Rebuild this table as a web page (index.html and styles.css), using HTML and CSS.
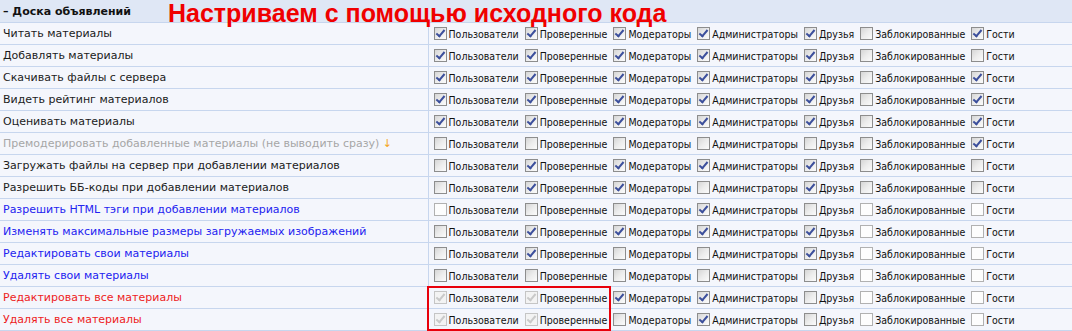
FILE: index.html
```html
<!DOCTYPE html>
<html lang="ru">
<head>
<meta charset="utf-8">
<title>Доска объявлений</title>
<link rel="stylesheet" href="styles.css">
</head>
<body>
<div class="wrap">
<table class="perm">
<colgroup><col class="c-name"><col class="c-opts"></colgroup>
<tr class="head"><td colspan="2"><div class="head-in"><b>– Доска объявлений</b><span class="note">Настриваем с помощью исходного кода</span></div></td></tr>
<tr><td class="name">Читать материалы</td><td class="opts"><div class="olist"><span class="opt"><i class="cb on"></i>Пользователи</span><span class="opt"><i class="cb on"></i>Проверенные</span><span class="opt"><i class="cb on"></i>Модераторы</span><span class="opt"><i class="cb on"></i>Администраторы</span><span class="opt"><i class="cb on"></i>Друзья</span><span class="opt"><i class="cb"></i>Заблокированные</span><span class="opt"><i class="cb on"></i>Гости</span></div></td></tr>
<tr><td class="name">Добавлять материалы</td><td class="opts"><div class="olist"><span class="opt"><i class="cb on"></i>Пользователи</span><span class="opt"><i class="cb on"></i>Проверенные</span><span class="opt"><i class="cb on"></i>Модераторы</span><span class="opt"><i class="cb on"></i>Администраторы</span><span class="opt"><i class="cb on"></i>Друзья</span><span class="opt"><i class="cb"></i>Заблокированные</span><span class="opt"><i class="cb"></i>Гости</span></div></td></tr>
<tr><td class="name">Скачивать файлы с сервера</td><td class="opts"><div class="olist"><span class="opt"><i class="cb on"></i>Пользователи</span><span class="opt"><i class="cb on"></i>Проверенные</span><span class="opt"><i class="cb on"></i>Модераторы</span><span class="opt"><i class="cb on"></i>Администраторы</span><span class="opt"><i class="cb on"></i>Друзья</span><span class="opt"><i class="cb"></i>Заблокированные</span><span class="opt"><i class="cb on"></i>Гости</span></div></td></tr>
<tr><td class="name">Видеть рейтинг материалов</td><td class="opts"><div class="olist"><span class="opt"><i class="cb on"></i>Пользователи</span><span class="opt"><i class="cb on"></i>Проверенные</span><span class="opt"><i class="cb on"></i>Модераторы</span><span class="opt"><i class="cb on"></i>Администраторы</span><span class="opt"><i class="cb on"></i>Друзья</span><span class="opt"><i class="cb"></i>Заблокированные</span><span class="opt"><i class="cb on"></i>Гости</span></div></td></tr>
<tr><td class="name">Оценивать материалы</td><td class="opts"><div class="olist"><span class="opt"><i class="cb on"></i>Пользователи</span><span class="opt"><i class="cb on"></i>Проверенные</span><span class="opt"><i class="cb on"></i>Модераторы</span><span class="opt"><i class="cb on"></i>Администраторы</span><span class="opt"><i class="cb on"></i>Друзья</span><span class="opt"><i class="cb"></i>Заблокированные</span><span class="opt"><i class="cb on"></i>Гости</span></div></td></tr>
<tr><td class="name muted">Премодерировать добавленные материалы (не выводить сразу) <span class="arrow">↓</span></td><td class="opts"><div class="olist"><span class="opt"><i class="cb"></i>Пользователи</span><span class="opt"><i class="cb"></i>Проверенные</span><span class="opt"><i class="cb"></i>Модераторы</span><span class="opt"><i class="cb"></i>Администраторы</span><span class="opt"><i class="cb"></i>Друзья</span><span class="opt"><i class="cb"></i>Заблокированные</span><span class="opt"><i class="cb on"></i>Гости</span></div></td></tr>
<tr><td class="name">Загружать файлы на сервер при добавлении материалов</td><td class="opts"><div class="olist"><span class="opt"><i class="cb"></i>Пользователи</span><span class="opt"><i class="cb on"></i>Проверенные</span><span class="opt"><i class="cb on"></i>Модераторы</span><span class="opt"><i class="cb on"></i>Администраторы</span><span class="opt"><i class="cb on"></i>Друзья</span><span class="opt"><i class="cb"></i>Заблокированные</span><span class="opt"><i class="cb"></i>Гости</span></div></td></tr>
<tr><td class="name">Разрешить ББ-коды при добавлении материалов</td><td class="opts"><div class="olist"><span class="opt"><i class="cb"></i>Пользователи</span><span class="opt"><i class="cb on"></i>Проверенные</span><span class="opt"><i class="cb on"></i>Модераторы</span><span class="opt"><i class="cb"></i>Администраторы</span><span class="opt"><i class="cb on"></i>Друзья</span><span class="opt"><i class="cb"></i>Заблокированные</span><span class="opt"><i class="cb"></i>Гости</span></div></td></tr>
<tr><td class="name blue">Разрешить HTML тэги при добавлении материалов</td><td class="opts"><div class="olist"><span class="opt"><i class="cb plain"></i>Пользователи</span><span class="opt"><i class="cb"></i>Проверенные</span><span class="opt"><i class="cb"></i>Модераторы</span><span class="opt"><i class="cb on"></i>Администраторы</span><span class="opt"><i class="cb"></i>Друзья</span><span class="opt"><i class="cb plain"></i>Заблокированные</span><span class="opt"><i class="cb plain"></i>Гости</span></div></td></tr>
<tr><td class="name blue">Изменять максимальные размеры загружаемых изображений</td><td class="opts"><div class="olist"><span class="opt"><i class="cb"></i>Пользователи</span><span class="opt"><i class="cb on"></i>Проверенные</span><span class="opt"><i class="cb on"></i>Модераторы</span><span class="opt"><i class="cb on"></i>Администраторы</span><span class="opt"><i class="cb on"></i>Друзья</span><span class="opt"><i class="cb plain"></i>Заблокированные</span><span class="opt"><i class="cb plain"></i>Гости</span></div></td></tr>
<tr><td class="name blue">Редактировать свои материалы</td><td class="opts"><div class="olist"><span class="opt"><i class="cb"></i>Пользователи</span><span class="opt"><i class="cb on"></i>Проверенные</span><span class="opt"><i class="cb"></i>Модераторы</span><span class="opt"><i class="cb"></i>Администраторы</span><span class="opt"><i class="cb on"></i>Друзья</span><span class="opt"><i class="cb plain"></i>Заблокированные</span><span class="opt"><i class="cb plain"></i>Гости</span></div></td></tr>
<tr><td class="name blue">Удалять свои материалы</td><td class="opts"><div class="olist"><span class="opt"><i class="cb"></i>Пользователи</span><span class="opt"><i class="cb"></i>Проверенные</span><span class="opt"><i class="cb"></i>Модераторы</span><span class="opt"><i class="cb"></i>Администраторы</span><span class="opt"><i class="cb"></i>Друзья</span><span class="opt"><i class="cb plain"></i>Заблокированные</span><span class="opt"><i class="cb plain"></i>Гости</span></div></td></tr>
<tr><td class="name red">Редактировать все материалы</td><td class="opts"><div class="olist"><span class="opt"><i class="cb dis"></i>Пользователи</span><span class="opt"><i class="cb dis"></i>Проверенные</span><span class="opt"><i class="cb on"></i>Модераторы</span><span class="opt"><i class="cb on"></i>Администраторы</span><span class="opt"><i class="cb"></i>Друзья</span><span class="opt"><i class="cb plain"></i>Заблокированные</span><span class="opt"><i class="cb plain"></i>Гости</span></div></td></tr>
<tr><td class="name red">Удалять все материалы</td><td class="opts"><div class="olist"><span class="opt"><i class="cb dis"></i>Пользователи</span><span class="opt"><i class="cb dis"></i>Проверенные</span><span class="opt"><i class="cb"></i>Модераторы</span><span class="opt"><i class="cb on"></i>Администраторы</span><span class="opt"><i class="cb"></i>Друзья</span><span class="opt"><i class="cb plain"></i>Заблокированные</span><span class="opt"><i class="cb plain"></i>Гости</span></div></td></tr>
</table>
<div class="mark"></div>
</div>
</body>
</html>
```

FILE: styles.css
```css
html, body {
  margin: 0;
  padding: 0;
  background: #f4f6fc;
}
.wrap {
  position: relative;
  width: 1072px;
}
.perm {
  width: 1072px;
  border-collapse: collapse;
  table-layout: fixed;
  font-family: "DejaVu Sans", Verdana, sans-serif;
  font-size: 11px;
  color: #1b1b1b;
}
.c-name { width: 428px; }
.c-opts { width: 644px; }
.perm td {
  padding: 0;
  border-bottom: 1px solid #c7d6ee;
  background: #f4f6fc;
  height: 21px;
  vertical-align: middle;
  overflow: hidden;
}
.perm .head td {
  background: #dfe7f5;
  height: 22px;
  overflow: visible;
}
.head-in {
  display: flex;
  align-items: center;
  height: 22px;
  padding-left: 3px;
  white-space: nowrap;
}
.head-in b {
  font-weight: bold;
  color: #111;
}
.note {
  margin-left: 37px;
  font-family: "Liberation Sans", Arial, sans-serif;
  font-weight: bold;
  font-size: 25px;
  line-height: 28px;
  color: #f00000;
  position: relative;
  top: 2px;
}
.perm td.name {
  padding-left: 3px;
  border-right: 1px solid #c7d6ee;
  white-space: nowrap;
}
.muted { color: #a6a6a6; }
.arrow { color: #f5a623; font-family: "DejaVu Sans", sans-serif; }
.blue { color: #2323f0; }
.red { color: #ee1c1c; }
.olist {
  display: flex;
  align-items: center;
  gap: 6px;
  padding-left: 5px;
  white-space: nowrap;
  font-family: "DejaVu Sans Condensed", "DejaVu Sans", sans-serif;
  font-stretch: condensed;
  font-size: 10.5px;
  color: #111;
}
.opt {
  display: inline-flex;
  align-items: center;
  gap: 2px;
}
.cb {
  display: inline-block;
  box-sizing: border-box;
  width: 13px;
  height: 13px;
  border: 1px solid #8d8d8d;
  background: linear-gradient(135deg, #d6d6d6 0%, #ececec 50%, #fbfbfb 100%);
  position: relative;
}
.cb.plain {
  border-color: #b1b1b1;
  background: #fdfdfd;
}
.cb.on::after,
.cb.dis::after {
  content: "";
  position: absolute;
  left: 3px;
  top: 0px;
  width: 3px;
  height: 7px;
  border: solid #3c4f9c;
  border-width: 0 2px 2px 0;
  transform: rotate(40deg);
}
.cb.dis {
  border-color: #c5c5c5;
  background: #f3f3f3;
}
.cb.dis::after {
  border-color: #c9c9c9;
}
.mark {
  position: absolute;
  left: 427px;
  top: 286px;
  width: 184px;
  height: 45px;
  box-sizing: border-box;
  border: 2px solid #e8000b;
  pointer-events: none;
}
```
